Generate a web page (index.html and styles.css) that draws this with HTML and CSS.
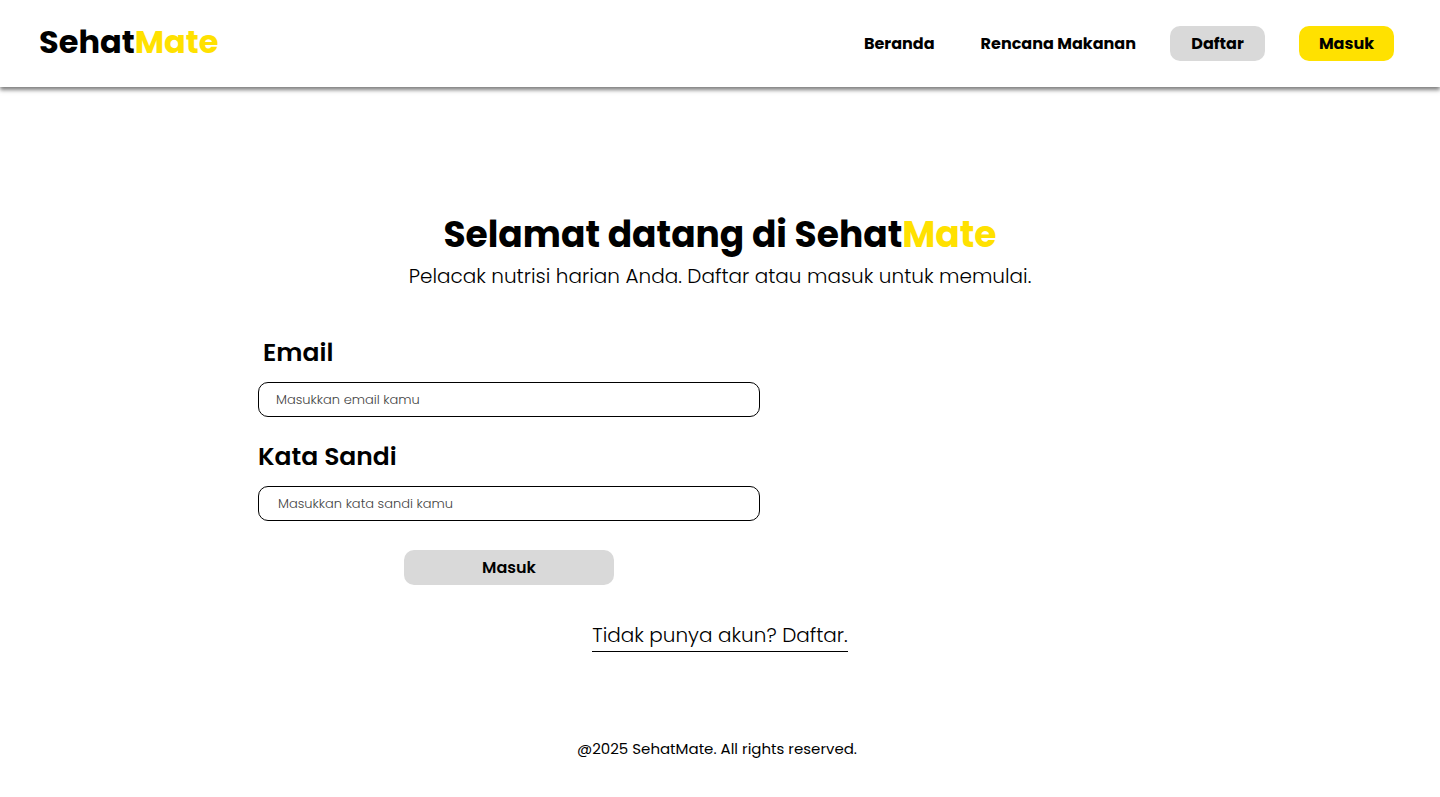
FILE: index.html
```html
<!DOCTYPE html>
<html lang="id">
<head>
<meta charset="utf-8">
<meta name="viewport" content="width=device-width, initial-scale=1">
<title>SehatMate</title>
<link rel="stylesheet" href="styles.css">
</head>
<body>
<header class="topbar">
  <a class="logo" href="#">Sehat<span class="accent">Mate</span></a>
  <nav class="nav">
    <a class="nav-link" href="#">Beranda</a>
    <a class="nav-link nav-plan" href="#">Rencana Makanan</a>
    <button class="btn" type="button">Daftar</button>
    <button class="btn btn-primary" type="button">Masuk</button>
  </nav>
</header>
<main class="main">
  <h1 class="title">Selamat datang di Sehat<span class="accent">Mate</span></h1>
  <p class="subtitle">Pelacak nutrisi harian Anda. Daftar atau masuk untuk memulai.</p>
  <form class="form">
    <label class="label label-email" for="email">Email</label>
    <input class="field" id="email" type="email" placeholder="Masukkan email kamu">
    <label class="label" for="password">Kata Sandi</label>
    <input class="field field-password" id="password" type="password" placeholder="Masukkan kata sandi kamu">
    <button class="btn btn-submit" type="submit">Masuk</button>
  </form>
  <a class="signup" href="#">Tidak punya akun? Daftar.</a>
</main>
<footer class="footer">@2025 SehatMate. All rights reserved.</footer>
</body>
</html>
```
FILE: styles.css
```css
* { box-sizing: border-box; }
body {
  margin: 0;
  min-height: 100vh;
  display: flex;
  flex-direction: column;
  background: #fff;
  color: #000;
  font-family: Poppins, Inter, "Open Sans", sans-serif;
}
a { color: inherit; text-decoration: none; }
.accent { color: #ffe100; }
.topbar {
  display: flex;
  align-items: center;
  justify-content: space-between;
  padding: 18px 46px 18px 39px;
  background: #fff;
  box-shadow: 0 3px 4px rgba(0, 0, 0, 0.5);
}
.logo { padding-bottom: 3px; font-size: 32px; line-height: 48px; font-weight: 700; }
.nav { display: flex; align-items: center; gap: 34px; }
.nav-link { font-size: 16px; line-height: 24px; font-weight: 700; }
.nav-plan { margin-left: 12px; }
.btn {
  width: 95px;
  height: 35px;
  padding: 0;
  border: 0;
  border-radius: 10px;
  background: #d9d9d9;
  color: #000;
  font: inherit;
  font-size: 16px;
  font-weight: 700;
}
.btn-primary { background: #ffe100; }
.main {
  display: flex;
  flex-direction: column;
  align-items: center;
  padding-top: 122px;
}
.title { margin: 0; font-size: 36px; line-height: 52px; font-weight: 700; }
.subtitle { margin: 0; font-size: 20px; line-height: 30px; font-weight: 300; }
.form {
  width: 924px;
  max-width: 100%;
  margin-top: 44px;
  display: flex;
  flex-direction: column;
  align-items: flex-start;
}
.label { font-size: 25px; line-height: 36px; font-weight: 600; margin-bottom: 11px; }
.label-email { margin-left: 5px; }
.field {
  width: 502px;
  max-width: 100%;
  height: 35px;
  margin-bottom: 22px;
  padding: 0 17px;
  border: 1px solid #000;
  border-radius: 10px;
  font: inherit;
  font-size: 13px;
  font-weight: 300;
}
.field::placeholder { color: #444; opacity: 1; }
.field-password { padding: 0 19px; margin-bottom: 29px; }
.btn-submit { width: 210px; margin-left: 146px; font-weight: 600; }
.signup {
  margin-top: 35px;
  border-bottom: 1px solid #000;
  font-size: 20px;
  line-height: 31px;
  font-weight: 300;
}
.footer { margin-top: auto; padding: 36px 6px 36px 0; text-align: center; font-size: 15px; line-height: 24px; }
```
